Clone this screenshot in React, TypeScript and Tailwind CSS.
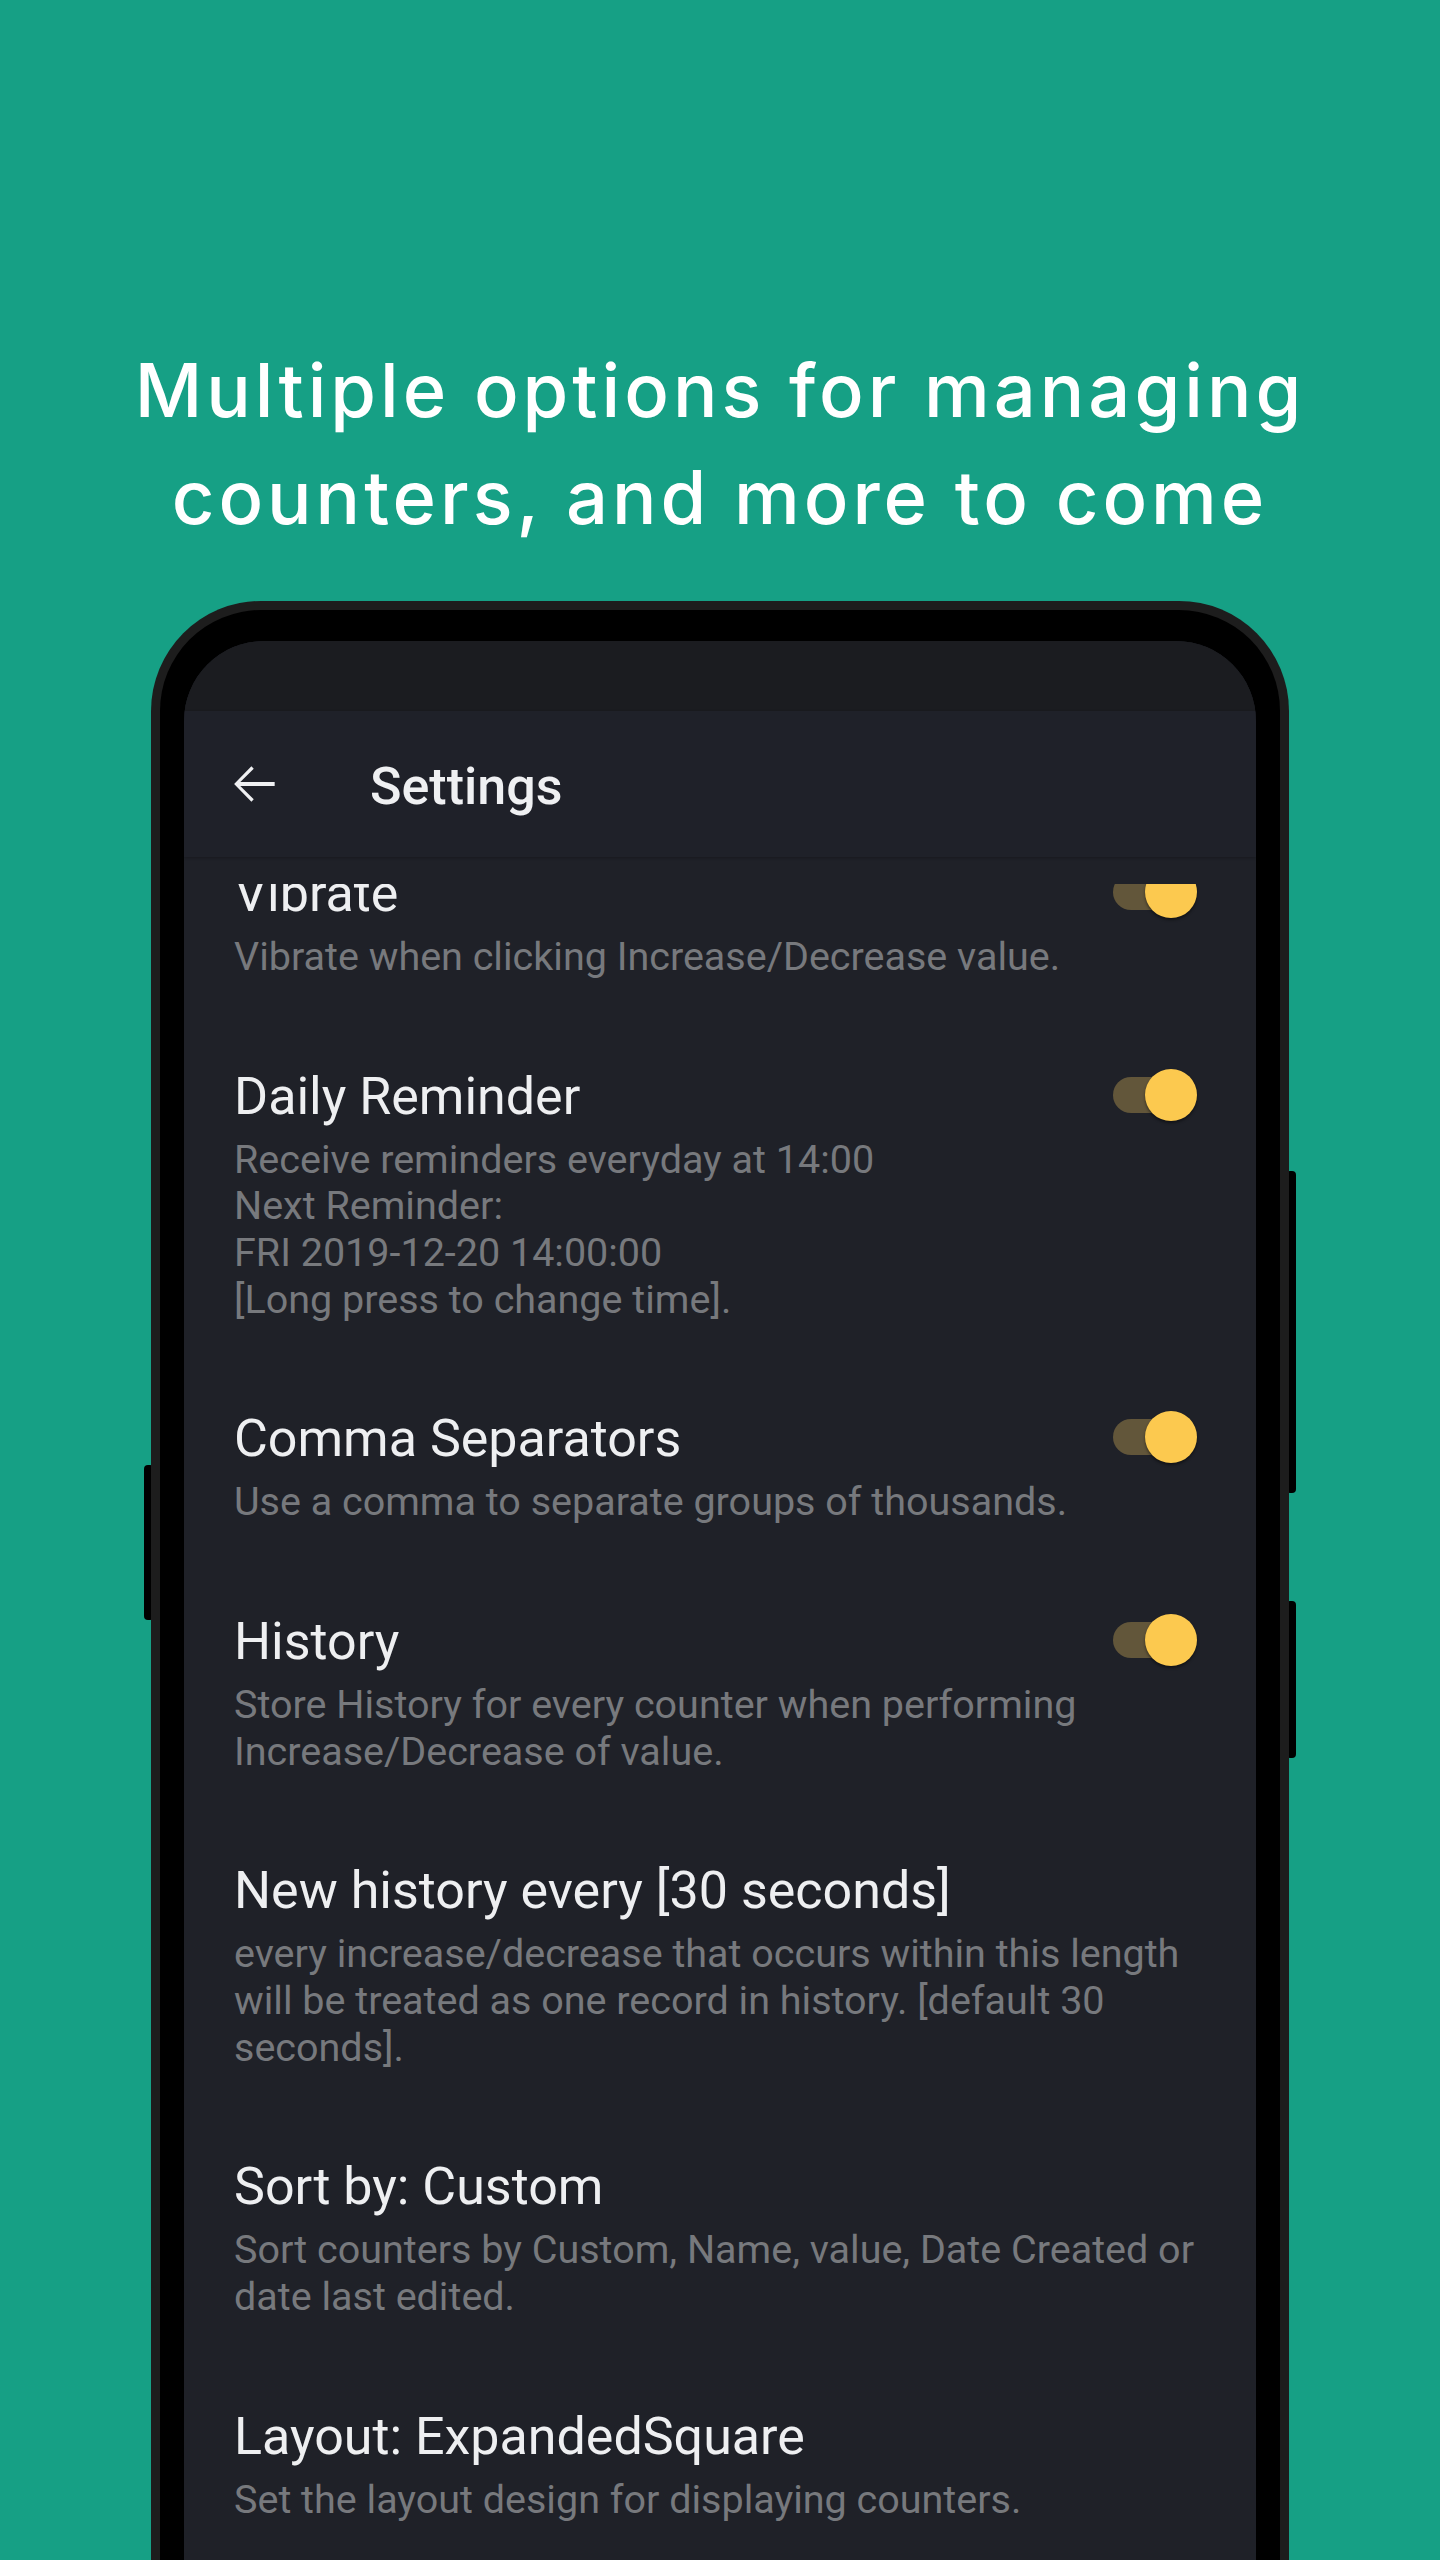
import React from "react";

type Item = { title: string; lines: string[]; toggle?: boolean };

const items: Item[] = [
  { title: "Vibrate", lines: ["Vibrate when clicking Increase/Decrease value."], toggle: true },
  {
    title: "Daily Reminder",
    lines: [
      "Receive reminders everyday at 14:00",
      "Next Reminder:",
      "FRI 2019-12-20 14:00:00",
      "[Long press to change time].",
    ],
    toggle: true,
  },
  { title: "Comma Separators", lines: ["Use a comma to separate groups of thousands."], toggle: true },
  {
    title: "History",
    lines: ["Store History for every counter when performing", "Increase/Decrease of value."],
    toggle: true,
  },
  {
    title: "New history every [30 seconds]",
    lines: [
      "every increase/decrease that occurs within this length",
      "will be treated as one record in history. [default 30",
      "seconds].",
    ],
  },
  {
    title: "Sort by: Custom",
    lines: ["Sort counters by Custom, Name, value, Date Created or", "date last edited."],
  },
  { title: "Layout: ExpandedSquare", lines: ["Set the layout design for displaying counters."] },
];

function Switch() {
  return (
    <div className="relative h-[56px] w-[84px] shrink-0">
      <div className="absolute left-0 top-[10px] h-[36px] w-[76px] rounded-full bg-[#62563a]" />
      <div className="absolute right-0 top-[2px] h-[52px] w-[52px] rounded-full bg-[#fcc94f] shadow-[0_2px_3px_rgba(0,0,0,0.45)]" />
    </div>
  );
}

function Pref({ item }: { item: Item }) {
  return (
    <div className="flex items-start pl-[50px] pr-[59px] pt-[44px] pb-[42px]">
      <div className="min-w-0 flex-1">
        <div className="whitespace-nowrap text-[52px] leading-[60px] text-[#eeeff1]">{item.title}</div>
        <div className="mt-[10px] text-[39.5px] leading-[46.67px] text-[#77797d]">
          {item.lines.map((l, i) => (
            <div key={i} className="whitespace-nowrap">
              {l}
            </div>
          ))}
        </div>
      </div>
      {item.toggle ? <Switch /> : null}
    </div>
  );
}

export default function App() {
  return (
    <div className="flex h-[2560px] w-[1440px] flex-col items-center overflow-hidden bg-[#16a085]">
      <h1 className="mt-[337px] text-center text-[74px] font-medium leading-[107px] tracking-[4px] text-white [font-family:Inter,'Noto_Sans',sans-serif]">
        Multiple options for managing
        <br />
        counters, and more to come
      </h1>

      <div className="relative mt-[50px] w-[1138px] shrink-0">
        <div className="absolute -left-[7px] top-[864px] h-[155px] w-[10px] rounded-[4px] bg-black" />
        <div className="absolute -right-[7px] top-[570px] h-[322px] w-[10px] rounded-[4px] bg-black" />
        <div className="absolute -right-[7px] top-[1000px] h-[157px] w-[10px] rounded-[4px] bg-black" />

        <div className="relative rounded-t-[110px] bg-[#1d1d1d] px-[9px] pt-[9px]">
          <div className="rounded-t-[101px] bg-black px-[24px] pt-[31px]">
            <div className="flex h-[1930px] flex-col overflow-hidden rounded-t-[80px] bg-[#1f2128] [font-family:Roboto,'Liberation_Sans',sans-serif]">
              <div className="h-[70px] shrink-0 bg-[#1b1c20]" />
              <div className="relative z-10 flex h-[146px] shrink-0 items-center bg-[#1f2129] shadow-[0_1px_3px_rgba(0,0,0,0.25)]">
                <svg className="ml-[39px]" width="62" height="62" viewBox="0 0 24 24" fill="#eff0f2">
                  <path d="M20 11.25H6.7l5.2-5.2-.9-.9L4.3 12l6.7 6.85.9-.9-5.2-5.2H20z" />
                </svg>
                <div className="ml-[85px] pt-[6px] text-[52px] font-medium leading-[60px] text-[#eff0f2]">
                  Settings
                </div>
              </div>
              <div className="flex min-h-0 flex-1 flex-col pt-[27px]">
                <div className="min-h-0 flex-1 overflow-hidden">
                  <div className="-mt-[64px]">
                    {items.map((it, i) => (
                      <Pref key={i} item={it} />
                    ))}
                  </div>
                </div>
              </div>
            </div>
          </div>
        </div>
      </div>
    </div>
  );
}
